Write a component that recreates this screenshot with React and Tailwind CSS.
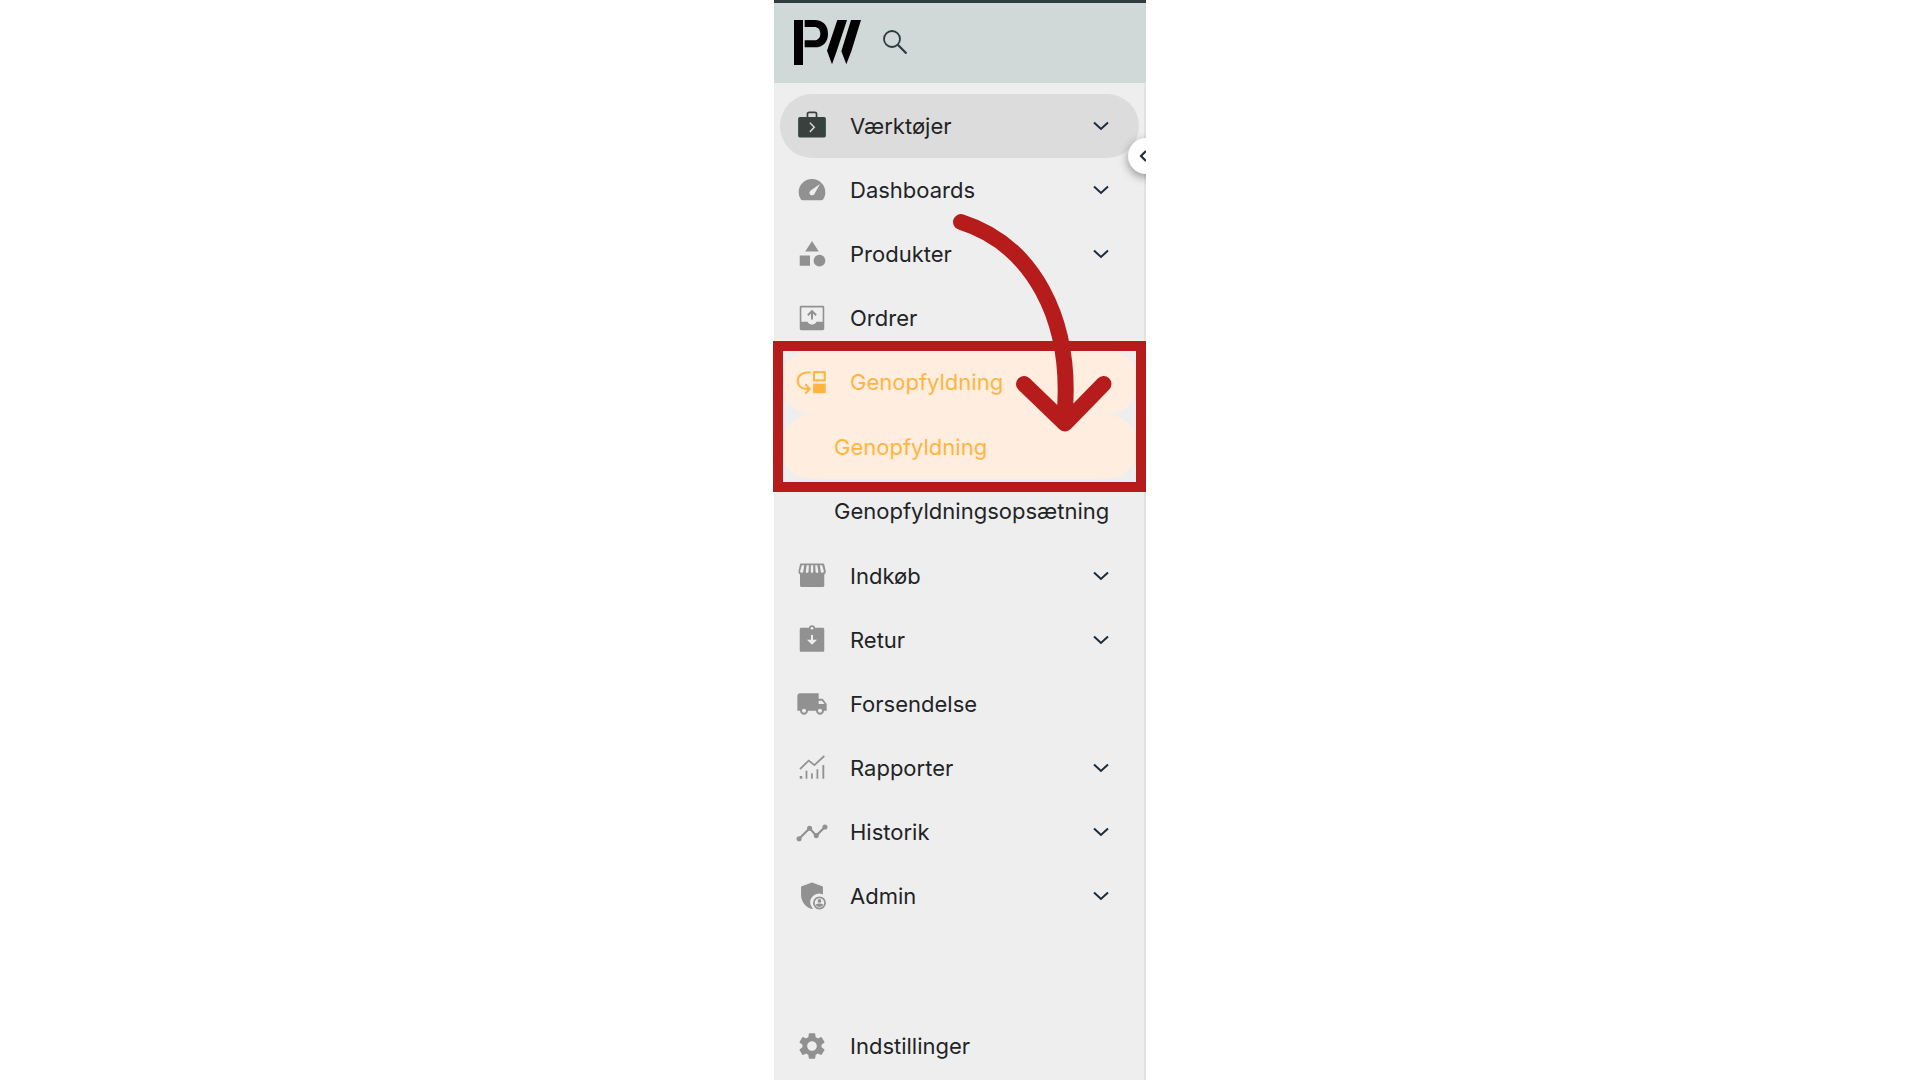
import React from "react";
import { MdLocalShipping, MdSettings } from "react-icons/md";

const Svg = ({ children, className = "size-8" }) => (
  <svg viewBox="0 0 24 24" fill="currentColor" aria-hidden="true" className={className}>
    {children}
  </svg>
);

const ToolboxIcon = () => (
  <Svg className="size-8 text-[#37423f]">
    <path d="M8.600 5.500V3c0-.8.4-1.200 1.200-1.200h4.400c.8 0 1.200.4 1.200 1.200v2.500" fill="none" stroke="currentColor" strokeWidth="1.300" />
    <rect x="1.600" y="5.300" width="20.800" height="15.300" rx="1.300" />
    <path d="M10.400 9.600l3.300 3.400-3.300 3.400" fill="none" stroke="#d8d8d8" strokeWidth="1.100" />
  </Svg>
);

const GaugeIcon = () => (
  <Svg>
    <path d="M12 3.800c5.600 0 10 4.500 10 9.900 0 2-.6 3.800-1.600 5.300-.3.500-.8.700-1.400.7H5c-.6 0-1.100-.2-1.400-.7A9.700 9.700 0 0 1 2 13.700c0-5.400 4.400-9.900 10-9.900z" />
    <path d="M18 7.500l-4.100 7.300c-.5.900-1.400 1.300-2.300 1.100-1.500-.3-2-1.900-1.100-3 .2-.3.500-.5.800-.7z" fill="#eeeeee" />
  </Svg>
);

const ShapesIcon = () => (
  <Svg>
    <path d="M12 2.300l5.100 7.900H6.900zM2.800 13.200h7.700v7.700H2.800z" />
    <circle cx="17.600" cy="17" r="4.400" />
  </Svg>
);

const OutboxIcon = () => (
  <Svg>
    <path
      fillRule="evenodd"
      d="M4 2.900h16c.8 0 1.200.4 1.200 1.200v15.800c0 .8-.4 1.200-1.200 1.200H4c-.8 0-1.200-.4-1.200-1.200V4.100c0-.8.4-1.200 1.200-1.200zM4 4.100v10.800h4.600c.7 1.300 1.900 2.100 3.400 2.100s2.700-.8 3.400-2.100H20V4.100z"
    />
    <path d="M12 13.200V7M8.900 9.900L12 6.800l3.100 3.100" fill="none" stroke="currentColor" strokeWidth="1.500" />
  </Svg>
);

const MoveDownIcon = () => (
  <Svg>
    <path
      d="M11 4.800H8.500C4.500 4.800 1.300 7.500 1.300 11.200c0 3.400 2.800 6 6.500 6h1.900M7 13.700l3.400 3.500L7 20.600"
      fill="none"
      stroke="currentColor"
      strokeWidth="1.500"
    />
    <rect x="13.500" y="4.600" width="8.100" height="6.200" fill="none" stroke="currentColor" strokeWidth="1.500" />
    <path d="M12.800 13.200h9.500v7.200h-9.500z" />
  </Svg>
);

const StoreIcon = () => (
  <Svg>
    <path d="M4 2.700h16c.7 0 1.100.3 1.300 1l1 4.600c.2 1.200-.2 2-1.100 2.600V19c0 .9-.4 1.300-1.200 1.300H4.200c-.8 0-1.200-.4-1.200-1.300v-8.100c-.9-.6-1.300-1.400-1.100-2.600l1-4.600c.1-.7.500-1 1.100-1z" />
    <path
      d="M4.300 3.900h1.900l-.8 5c-.2 1-2.400 1-2.300-.4zM8 3.900h1.700l-.3 5c-.1 1.100-2.200 1.100-2.100 0zM11.100 3.900h1.800v5c0 1.100-1.800 1.100-1.800 0zM14.400 3.900H16l.8 5c.1 1.100-2 1.100-2.100 0zM17.800 3.900h1.900l1.200 4.600c.1 1.400-2.100 1.400-2.300.4z"
      fill="#eeeeee"
    />
  </Svg>
);

const ReturnIcon = () => (
  <Svg>
    <path d="M4 2.900h16c.8 0 1.200.4 1.200 1.200v15.500c0 .8-.4 1.200-1.200 1.200H4c-.8 0-1.200-.4-1.200-1.200V4.100c0-.8.4-1.200 1.200-1.200z" />
    <circle cx="12" cy="3.200" r="2.300" />
    <circle cx="12" cy="3.200" r="1" fill="#eeeeee" />
    <path d="M12 8.200v6.200" fill="none" stroke="#eeeeee" strokeWidth="1.500" />
    <path d="M8.200 11.900h7.600L12 15.500z" fill="#eeeeee" />
  </Svg>
);

const ReportIcon = () => (
  <Svg>
    <path d="M2.800 18h1.900v2H2.800zM7.200 14h1.300v6H7.200zM11.300 16h1.300v4h-1.300zM15.400 13h1.300v7h-1.300zM19.800 9.800h1.400V20h-1.400z" />
    <path d="M3 12.800L9.500 6.400l4.300 3.400L21.200 3" fill="none" stroke="currentColor" strokeWidth="1.300" />
  </Svg>
);

const TimelineIcon = () => (
  <Svg>
    <path d="M2.300 17l7.900-7.800 5 5.500 6.500-6.500" fill="none" stroke="currentColor" strokeWidth="1.600" />
    <circle cx="2.300" cy="17" r="1.900" />
    <circle cx="10.200" cy="9.200" r="1.900" />
    <circle cx="15.200" cy="14.700" r="1.900" />
    <circle cx="21.700" cy="8.200" r="1.900" />
  </Svg>
);

const AdminIcon = () => (
  <Svg>
    <path d="M12 1.800l8.200 3v6.100a6.500 6.500 0 0 0-8.600 9c.3.600.7 1.200 1.200 1.600l-.8.300c-5-1.300-8.200-5.700-8.200-10.700V4.800z" />
    <circle cx="17.600" cy="17.200" r="4.200" fill="none" stroke="currentColor" strokeWidth="1.300" />
    <circle cx="17.600" cy="15.700" r="1.400" />
    <path d="M14.700 18.300c1.500-1 4.300-1 5.800 0-.6 1.200-1.700 1.900-2.900 1.900s-2.300-.7-2.900-1.900z" />
  </Svg>
);

const Chevron = () => (
  <svg viewBox="0 0 16 10" fill="none" aria-hidden="true" className="h-2.5 w-4 text-[#1d2b3a]">
    <path d="M1 1.500l7 6.500 7-6.500" stroke="currentColor" strokeWidth="2" />
  </svg>
);

const Logo = () => (
  <svg viewBox="73 60 201 135" role="img" aria-label="PW" className="h-[45px] w-[67px]">
    <path d="M73 60h27v135H73zM105 60h30c25 0 40 16 40 41s-15 41-40 41h-30v-21h28c12 0 19-8 19-20s-7-20-19-20h-28zM203 60h29l-31 94-14 39-15-41zM244 60h30l-29 94-15 39-15-39z" />
  </svg>
);

const row =
  "flex h-16 w-full items-center rounded-full pr-[30px] text-left text-[22px] leading-8 focus-visible:outline-2";

function Item({ icon, label, expandable = true, tone = "text-[#1f2426]", iconTone = "text-[#919191]" }) {
  return (
    <li>
      <button type="button" className={`${row} gap-[22px] pl-4 ${tone}`}>
        <span className={iconTone}>{icon}</span>
        <span className="flex-1">{label}</span>
        {expandable && <Chevron />}
      </button>
    </li>
  );
}

export default function App() {
  return (
    <div className="flex min-h-screen justify-center bg-white font-['Inter',sans-serif]">
      <div className="relative flex w-[372px]">
        <aside className="flex w-full flex-col bg-[#eeeeee]">
          <header className="flex h-[83px] shrink-0 items-center gap-[22px] border-t-[3px] border-[#2f3b3e] bg-[#d0d9d7] pb-0.5 pl-5">
            <Logo />
            <button type="button" aria-label="Søg" className="text-[#2b3b3d]">
              <svg viewBox="0 0 24 24" fill="none" stroke="currentColor" strokeWidth="1.800" aria-hidden="true" className="size-6">
                <circle cx="9" cy="9" r="8" />
                <path d="M14.800 14.800L23.500 23.500" strokeWidth="2.200" />
              </svg>
            </button>
          </header>

          <nav className="flex flex-1 flex-col border-r-2 border-[#e2e2e2] pt-[11px] pr-[5px] pb-0.5 pl-1.5">
            <ul>
              <Item icon={<ToolboxIcon />} label="Værktøjer" tone="bg-[#dcdcdc] text-[#1f2426]" />
              <Item icon={<GaugeIcon />} label="Dashboards" />
              <Item icon={<ShapesIcon />} label="Produkter" />
              <Item icon={<OutboxIcon />} label="Ordrer" expandable={false} />
              <Item
                icon={<MoveDownIcon />}
                label="Genopfyldning"
                expandable={false}
                tone="bg-[#ffeddf] text-[#ffb53f]"
                iconTone="text-[#ffb53f]"
              />
              <li>
                <ul className="my-px">
                  <li>
                    <a href="#genopfyldning" className={`${row} bg-[#ffeddf] pl-[54px] text-[#ffb53f]`}>
                      Genopfyldning
                    </a>
                  </li>
                  <li>
                    <a href="#opsaetning" className={`${row} pl-[54px] text-[#1f2426]`}>
                      Genopfyldningsopsætning
                    </a>
                  </li>
                </ul>
              </li>
              <Item icon={<StoreIcon />} label="Indkøb" />
              <Item icon={<ReturnIcon />} label="Retur" />
              <Item icon={<MdLocalShipping className="size-8" />} label="Forsendelse" expandable={false} />
              <Item icon={<ReportIcon />} label="Rapporter" />
              <Item icon={<TimelineIcon />} label="Historik" />
              <Item icon={<AdminIcon />} label="Admin" />
            </ul>
            <ul className="mt-auto">
              <Item icon={<MdSettings className="size-8" />} label="Indstillinger" expandable={false} />
            </ul>
          </nav>
        </aside>

        <div className="pointer-events-none absolute top-20 right-0 h-36 w-10 overflow-hidden">
          <button
            type="button"
            aria-label="Skjul menu"
            className="pointer-events-auto absolute top-[58px] left-[22px] flex size-9 items-center rounded-full bg-white pl-[11px] text-[#1f3336] shadow-[0_3px_10px_rgba(0,0,0,0.4)]"
          >
            <svg viewBox="0 0 8 12" fill="none" aria-hidden="true" className="h-3 w-2">
              <path d="M7 1L2 6l5 5" stroke="currentColor" strokeWidth="2.200" />
            </svg>
          </button>
        </div>

        <div className="pointer-events-none absolute top-[341px] right-0 -left-px h-[151px] border-[10px] border-[#b71c1c]" />
        <svg
          viewBox="950 210 170 226"
          fill="none"
          stroke="#b71c1c"
          strokeWidth="16"
          strokeLinecap="round"
          strokeLinejoin="round"
          aria-hidden="true"
          className="pointer-events-none absolute top-[210px] left-44 h-[226px] w-[170px]"
        >
          <path d="M961 222C1030 244 1075 316 1064 422M1024 384l41 39.500 38.500-39.500" />
        </svg>
      </div>
    </div>
  );
}
